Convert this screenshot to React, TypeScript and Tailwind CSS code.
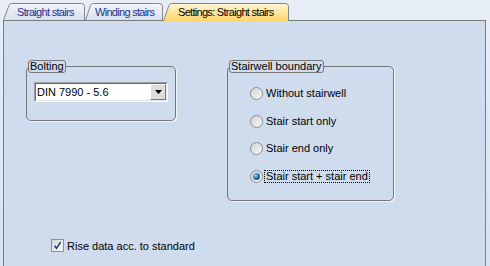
import React from 'react'

type TabProps = {
  label: string
  width: number
  height: number
  textLeft: number
  active?: boolean
  path: string
  id: string
}

const Tab = ({ label, width, height, textLeft, active, path, id }: TabProps) => {
  return (
    <div
      className={active ? 'relative z-10 -mb-[1px] shrink-0' : 'relative shrink-0'}
      style={{ width, height }}
    >
      <svg className="absolute inset-0" width={width} height={height} viewBox={`0 0 ${width} ${height}`}>
        <defs>
          <linearGradient id={id} x1="0" y1="0" x2="0" y2="1">
            {active ? (
              <>
                <stop offset="0" stopColor="#fff6d6" />
                <stop offset="1" stopColor="#ffd46a" />
              </>
            ) : (
              <>
                <stop offset="0" stopColor="#f2f5fb" />
                <stop offset="1" stopColor="#d6e0ef" />
              </>
            )}
          </linearGradient>
        </defs>
        <path d={path} fill={`url(#${id})`} stroke="#878787" strokeWidth="1" />
      </svg>
      <div
        className={
          active
            ? 'relative flex h-[17px] items-center whitespace-nowrap tracking-[-0.7px] text-black'
            : 'relative flex h-[17px] items-center whitespace-nowrap tracking-[-0.7px] text-[#1f2f8f]'
        }
        style={{ paddingLeft: textLeft }}
      >
        {label}
      </div>
    </div>
  )
}

const GroupBox = ({ title, className, children }: { title: string; className: string; children: React.ReactNode }) => {
  return (
    <div className={`relative rounded-[5px] border border-[#767676] shadow-[1px_1px_0_#f4f7fb] ${className}`}>
      <div className="absolute left-[1px] top-[-7px] flex h-[13px] items-center rounded-[3px] border border-[#767676] bg-[#cfdcee] px-[1px] leading-none whitespace-nowrap">
        {title}
      </div>
      {children}
    </div>
  )
}

const Radio = ({ label, checked, className }: { label: string; checked?: boolean; className: string }) => {
  return (
    <div className={`flex h-[14px] items-center gap-[3px] ${className}`}>
      <div className="flex h-[13px] w-[13px] shrink-0 items-center justify-center rounded-full border border-[#8d8f90] bg-gradient-to-br from-[#d0d1d2] to-[#fafafa]">
        {checked && (
          <div className="h-[7px] w-[7px] rounded-full bg-[radial-gradient(circle_at_35%_35%,#9ad0f2,#1d64a6_55%,#0a3465)]" />
        )}
      </div>
      {checked ? (
        <span className="-ml-[2px] border border-dotted border-black px-[1px] leading-[11px] whitespace-nowrap">{label}</span>
      ) : (
        <span className="whitespace-nowrap">{label}</span>
      )}
    </div>
  )
}

export default function App() {
  return (
    <div className="flex h-[266px] w-[490px] flex-col overflow-hidden bg-gradient-to-b from-[#e8eef8] to-[#d8e2f0] font-['Liberation_Sans',Arial,sans-serif] text-[11px] leading-[14px] text-black">
      {/* tab strip */}
      <div className="flex h-[20px] shrink-0 items-end pl-[3px]">
        <Tab
          id="t1"
          label="Straight stairs"
          width={82}
          height={17}
          textLeft={14}
          path="M0.5 17 L6 2.5 Q6.8 0.5 9 0.5 L78.5 0.5 Q81.5 0.5 81.5 3.5 L81.5 17"
        />
        <Tab
          id="t2"
          label="Winding stairs"
          width={78}
          height={17}
          textLeft={10}
          path="M0.5 17 L5.5 2.5 Q6.3 0.5 8.5 0.5 L74.5 0.5 Q77.5 0.5 77.5 3.5 L77.5 17"
        />
        <Tab
          id="t3"
          label="Settings: Straight stairs"
          width={126}
          height={18}
          textLeft={15}
          active
          path="M0.5 18 L6 2.5 Q6.8 0.5 9 0.5 L122.5 0.5 Q125.5 0.5 125.5 3.5 L125.5 18"
        />
      </div>

      {/* page */}
      <div className="ml-[3px] mr-[4px] flex-1 border border-b-0 border-[#7c7c7c] bg-[#cfdcee]">
        <div className="flex items-start gap-[51px] pl-[22px] pt-[45px]">
          <GroupBox title="Bolting" className="h-[55px] w-[150px] pl-[7px] pt-[15px]">
            <div className="h-[20px] w-[134px] border border-t-[#a0a0a0] border-l-[#a0a0a0] border-b-white border-r-white">
              <div className="flex h-full items-center justify-between border border-t-[#6a6a6a] border-l-[#6a6a6a] border-b-[#e4e4e4] border-r-[#e4e4e4] bg-white pl-[1px]">
                <span className="whitespace-nowrap">DIN 7990 - 5.6</span>
                <div className="flex h-[16px] w-[16px] items-center justify-center border border-t-white border-l-white border-b-[#7d7d7d] border-r-[#7d7d7d] bg-[#dcdcdc]">
                  <svg width="7" height="4" viewBox="0 0 7 4">
                    <polygon points="0,0 7,0 3.5,4" fill="#000" />
                  </svg>
                </div>
              </div>
            </div>
          </GroupBox>

          <GroupBox title="Stairwell boundary" className="h-[135px] w-[167px] pl-[22px]">
            <Radio className="mt-[19px]" label="Without stairwell" />
            <Radio className="mt-[14px]" label="Stair start only" />
            <Radio className="mt-[13px]" label="Stair end only" />
            <Radio className="mt-[14px]" label="Stair start + stair end" checked />
          </GroupBox>
        </div>

        <div className="mt-[38px] flex h-[13px] items-center gap-[3px] pl-[47px]">
          <div className="flex h-[13px] w-[13px] items-center justify-center border border-[#8e8f8f] bg-gradient-to-br from-[#d6d7d8] to-[#fbfbfb]">
            <svg width="9" height="9" viewBox="0 0 9 9">
              <path d="M1.5 4.8 L3.5 7.3 L7.6 1.2" fill="none" stroke="#1c2f86" strokeWidth="1.5" />
            </svg>
          </div>
          <span className="whitespace-nowrap">Rise data acc. to standard</span>
        </div>
      </div>
    </div>
  )
}
